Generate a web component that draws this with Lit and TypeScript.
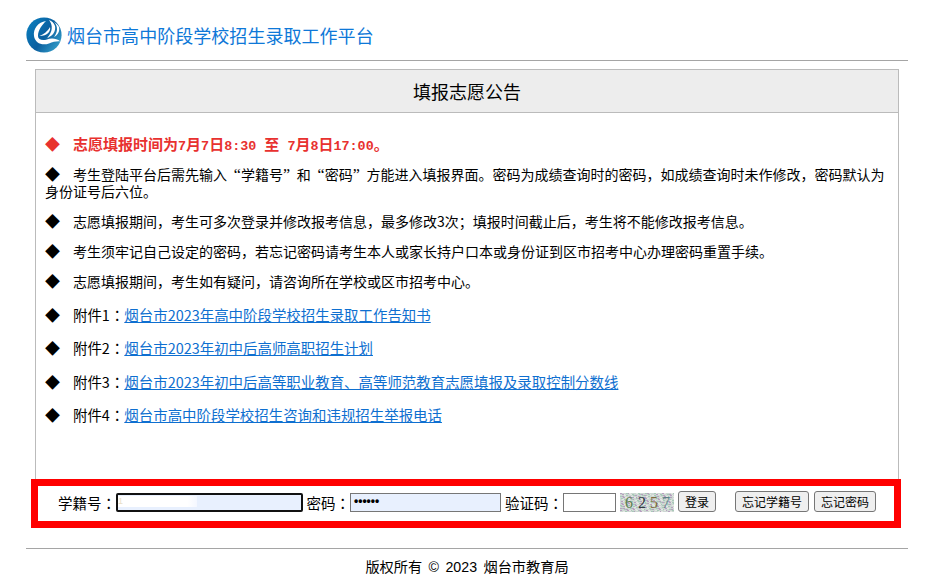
import { LitElement, html, css, svg } from "lit";
import { customElement } from "lit/decorators.js";

const links = [
  ["附件1", "烟台市2023年高中阶段学校招生录取工作告知书"],
  ["附件2", "烟台市2023年初中后高师高职招生计划"],
  ["附件3", "烟台市2023年初中后高等职业教育、高等师范教育志愿填报及录取控制分数线"],
  ["附件4", "烟台市高中阶段学校招生咨询和违规招生举报电话"],
];

const noiseColours = ["#b79fc0", "#d9c4d6", "#a8c9b8", "#c9b2c4", "#e4e6e2", "#9fb8b0"];
const noise = Array.from({ length: 260 }, (_, i) => {
  const x = (i * 37) % 54;
  const y = (i * 23 + (i % 7)) % 19;
  return svg`<rect x=${x} y=${y} width="2" height="1" fill=${noiseColours[(i * 5 + (i % 4)) % 6]} />`;
});

@customElement("app-root")
export class AppRoot extends LitElement {
  static styles = css`
    :host { display: block; width: 927px; height: 583px; overflow: hidden; background: #fff;
      font-family: "Noto Sans CJK SC", sans-serif; font-size: 14px; color: #000; }
    .page { margin: 0 19px 0 26px; }
    .top { height: 60px; display: flex; align-items: flex-start; gap: 5px; border-bottom: 1px solid #a5a5a5; }
    .top svg { display: block; margin-top: 17px; }
    .title { font-size: 18px; color: #0e78d8; margin-top: 22px; line-height: 26px; letter-spacing: 0.04px; }
    .panel { margin: 8px 9px 0; height: 410px; border: 1px solid #bbb; border-bottom: 0; box-sizing: border-box; }
    .phead { height: 42px; background: #ededed; border-bottom: 1px solid #bbb; text-align: center; font-size: 18px; line-height: 42px; }
    .notes { padding: 22px 13px 0 9px; }
    .note { margin: 0 0 13px; line-height: 17px; }
    .note.last { margin-bottom: 16px; }
    .note.attach { margin-bottom: 16.4px; font-size: 14.45px; }
    .note.red { color: #e8312f; font-weight: 700; font-size: 15px; margin-bottom: 14px; }
    .mk { display: inline-block; width: 28px; font-size: 15px; line-height: 0; }
    .q { display: inline-block; width: 10.75px; font: 16px/0 "Liberation Serif", serif; }
    .q.open { text-align: right; }
    .colon { font-family: "Noto Sans CJK TC", sans-serif; line-height: 0; }
    .mono { font-family: "Liberation Mono", "Noto Sans CJK SC", monospace; font-weight: 700; font-size: 13.4px; white-space: pre; line-height: 0; }
    a { color: #0e6fd0; text-decoration: underline; }
    .login { margin: 0 7px 0 5px; height: 49px; border: 7px solid #f00; box-sizing: border-box; display: flex; align-items: flex-start; padding: 5px 0 0 20px; white-space: nowrap; font-size: 14.5px; }
    .lb { line-height: 21px; margin-top: 1px; flex: none; }
    .inp { box-sizing: border-box; height: 19px; flex: none; border: 1px solid #767676; background: #e8f0fe; font: 12px "Liberation Sans", sans-serif; padding: 0 3px; line-height: 15px; margin-top: 2px; }
    .id { width: 187px; border: 2px solid #111; border-radius: 2px; margin-right: 3.5px; padding: 0; display: flex; align-items: center; }
    .mask { width: 79px; height: 11px; margin-top: -3px; font-size: 9px; line-height: 11px; color: #e9dfca; overflow: hidden; background: linear-gradient(90deg, #fff 88%, #f4f7ff); }
    .pw { width: 151px; margin-right: 4px; font-weight: 700; }
    .code { width: 53px; background: #fff; margin-right: 4px; }
    .cap { width: 54px; height: 19px; margin-right: 4px; margin-top: 2px; display: block; flex: none; }
    button { box-sizing: border-box; height: 21px; flex: none; padding: 0; margin-top: 0; font: 12px "Noto Sans CJK SC", sans-serif; line-height: 17px; background: #efefef; border: 1px solid #767676; border-radius: 3px; color: #000; }
    .b1 { width: 38px; margin-right: 19px; }
    .b2 { width: 74px; margin-right: 5px; }
    .b3 { width: 62px; }
    .foot { margin-top: 20px; border-top: 1px solid #a5a5a5; text-align: center; font: 14.2px/18px "Liberation Sans", "Noto Sans CJK SC", sans-serif; padding-top: 9px; word-spacing: 2.5px; }
  `;

  render() {
    return html`<div class="page">
      <div class="top">
        <svg width="36" height="36" viewBox="0 0 36 36">
          <defs>
            <linearGradient id="g" x1="0" y1="0.2" x2="1" y2="0.9">
              <stop offset="0" stop-color="#0a7dbd" /><stop offset="0.5" stop-color="#0b5f9f" /><stop offset="1" stop-color="#3aa7cf" />
            </linearGradient>
          </defs>
          <circle cx="18" cy="18" r="17.6" fill="url(#g)" />
          <path d="M20 4C12 5 7 12 8 19 9 26 16 29 23 26.500 27 25 31 24 34.500 24.500 30 21 25 21 21 22.500 16 24 12 22.500 12 19 12 13 16 8 20 4z" fill="#fff" />
          <path d="M13 19C17 18 22 14 24 10 25 14 22 19 13 19z" fill="#fff" />
          <path d="M23 3C27 8 27 15 21 21 27 19 30 14 29 9 28 6 26 4 23 3z" fill="#fff" />
          <path d="M28 5C32 9 32 15 28 20 32 18 34 14 33 10 32 8 30 6 28 5z" fill="#fff" />
        </svg>
        <span class="title">烟台市高中阶段学校招生录取工作平台</span>
      </div>
      <div class="panel">
        <div class="phead">填报志愿公告</div>
        <div class="notes">
          <p class="note red"><span class="mk">◆</span>志愿填报时间为<span class="mono">7</span>月<span class="mono">7</span>日<span class="mono">8:30 </span>至<span class="mono"> 7</span>月<span class="mono">8</span>日<span class="mono">17:00</span>。</p>
          <p class="note"><span class="mk">◆</span>考生登陆平台后需先输入 <span class="q open">“</span>学籍号<span class="q">”</span> 和 <span class="q open">“</span>密码<span class="q">”</span> 方能进入填报界面。密码为成绩查询时的密码，如成绩查询时未作修改，密码默认为身份证号后六位。</p>
          <p class="note"><span class="mk">◆</span>志愿填报期间，考生可多次登录并修改报考信息，最多修改3次；填报时间截止后，考生将不能修改报考信息。</p>
          <p class="note"><span class="mk">◆</span>考生须牢记自己设定的密码，若忘记密码请考生本人或家长持户口本或身份证到区市招考中心办理密码重置手续。</p>
          <p class="note last"><span class="mk">◆</span>志愿填报期间，考生如有疑问，请咨询所在学校或区市招考中心。</p>
          ${links.map(([l, t]) => html`<p class="note attach"><span class="mk">◆</span>${l}<span class="colon">：</span><a href="#">${t}</a></p>`)}
        </div>
      </div>
      <div class="login">
        <span class="lb">学籍号<span class="colon">：</span></span>
        <div class="inp id"><div class="mask">1</div></div>
        <span class="lb">密码<span class="colon">：</span></span>
        <div class="inp pw">••••••</div>
        <span class="lb">验证码<span class="colon">：</span></span>
        <div class="inp code"></div>
        <svg class="cap" viewBox="0 0 54 19">
          <rect width="54" height="19" fill="#cdd8d3" />
          ${noise}
          <text x="5" y="15" font-family="Liberation Serif" font-size="16" fill="#5f8052">6</text>
          <text x="18" y="15" font-family="Liberation Serif" font-size="16" fill="#333a44">2</text>
          <text x="30" y="15" font-family="Liberation Serif" font-size="16" fill="#7f6c3f">5</text>
          <text x="42" y="15" font-family="Liberation Serif" font-size="16" fill="#5b7f86">7</text>
        </svg>
        <button class="b1">登录</button>
        <button class="b2">忘记学籍号</button>
        <button class="b3">忘记密码</button>
      </div>
      <div class="foot">版权所有 © 2023 烟台市教育局</div>
    </div>`;
  }
}
